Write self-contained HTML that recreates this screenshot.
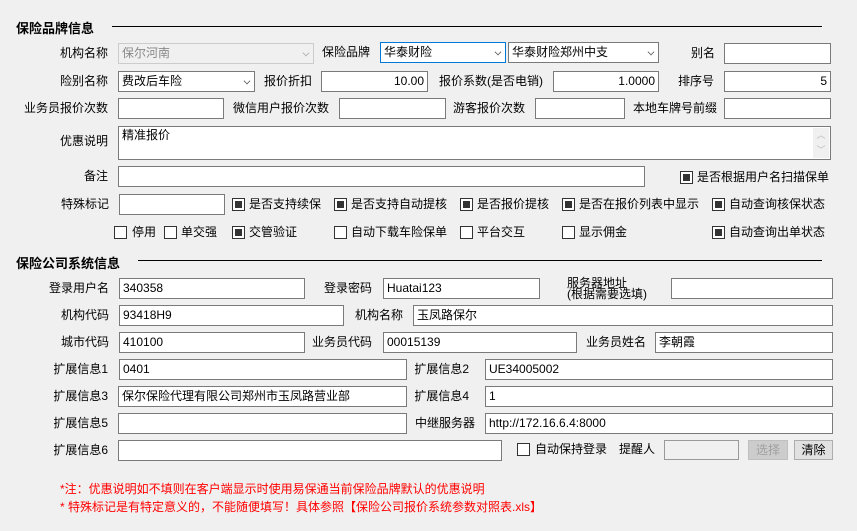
<!DOCTYPE html>
<html><head><meta charset="utf-8">
<style>
body{margin:0;width:857px;height:531px;background:#f0f0f0;font-family:"Liberation Sans","Noto Sans CJK SC",sans-serif;font-size:12px;color:#000;position:relative;overflow:hidden}
div,span{position:absolute;box-sizing:border-box;white-space:nowrap}
.i{background:#fff;border:1px solid #7a7a7a;height:21px;line-height:19px;padding:0 3px;font-size:12px}
.r{text-align:right}
.l{line-height:21px;text-align:right}
.h{font-weight:bold;font-size:13px}
.ln{height:1px;background:#000}
.cb{width:13px;height:13px;border:1px solid #333;background:#fff}
.cb.on::after{content:"";position:absolute;left:2px;top:2px;width:7px;height:7px;background:#333}
.ct{line-height:13px}
.dd{position:absolute;right:4px;top:6px;width:6px;height:6px;border-right:1px solid #555;border-bottom:1px solid #555;transform:rotate(45deg) scale(.8)}
.red{color:#f00;font-size:12px}
.btn{height:20px;border:1px solid #adadad;background:#e1e1e1;text-align:center;line-height:18px}
</style></head><body>
<div class="h" style="left:16px;top:18px">保险品牌信息</div>
<div class="ln" style="left:112px;top:26px;width:710px"></div>

<div class="l" style="right:749px;top:43px">机构名称</div>
<div class="i" style="left:118px;top:43px;width:196px;background:#f0f0f0;border-color:#ccc;color:#888">保尔河南<span class="dd" style="border-color:#aaa"></span></div>
<div class="l" style="right:487px;top:42px">保险品牌</div>
<div class="i" style="left:380px;top:42px;width:126px;border-color:#0078d7">华泰财险<span class="dd"></span></div>
<div class="i" style="left:508px;top:42px;width:151px">华泰财险郑州中支<span class="dd"></span></div>
<div class="l" style="right:142px;top:43px">别名</div>
<div class="i" style="left:724px;top:43px;width:107px"></div>

<div class="l" style="right:749px;top:71px">险别名称</div>
<div class="i" style="left:118px;top:71px;width:137px">费改后车险<span class="dd"></span></div>
<div class="l" style="right:545px;top:71px">报价折扣</div>
<div class="i r" style="left:321px;top:71px;width:107px">10.00</div>
<div class="l" style="right:314px;top:71px">报价系数(是否电销)</div>
<div class="i r" style="left:553px;top:71px;width:106px">1.0000</div>
<div class="l" style="right:143px;top:71px">排序号</div>
<div class="i r" style="left:724px;top:71px;width:107px">5</div>

<div class="l" style="right:749px;top:98px">业务员报价次数</div>
<div class="i" style="left:118px;top:98px;width:106px"></div>
<div class="l" style="right:528px;top:98px">微信用户报价次数</div>
<div class="i" style="left:339px;top:98px;width:107px"></div>
<div class="l" style="right:332px;top:98px">游客报价次数</div>
<div class="i" style="left:535px;top:98px;width:90px"></div>
<div class="l" style="right:140px;top:98px">本地车牌号前缀</div>
<div class="i" style="left:724px;top:98px;width:107px"></div>

<div class="l" style="right:749px;top:131px">优惠说明</div>
<div class="i" style="left:118px;top:126px;width:713px;height:34px;line-height:16px">精准报价
<span style="right:1px;top:1px;width:16px;height:30px;background:#f0f0f0;color:#bbb;font-size:9px;text-align:center;line-height:15px">︿<br>﹀</span></div>

<div class="l" style="right:749px;top:166px">备注</div>
<div class="i" style="left:118px;top:166px;width:527px"></div>
<div class="cb on" style="left:680px;top:171px"></div><div class="ct" style="left:697px;top:171px">是否根据用户名扫描保单</div>

<div class="l" style="right:748px;top:194px">特殊标记</div>
<div class="i" style="left:119px;top:194px;width:106px"></div>
<div class="cb on" style="left:232px;top:198px"></div><div class="ct" style="left:249px;top:198px">是否支持续保</div>
<div class="cb on" style="left:334px;top:198px"></div><div class="ct" style="left:351px;top:198px">是否支持自动提核</div>
<div class="cb on" style="left:460px;top:198px"></div><div class="ct" style="left:477px;top:198px">是否报价提核</div>
<div class="cb on" style="left:562px;top:198px"></div><div class="ct" style="left:579px;top:198px">是否在报价列表中显示</div>
<div class="cb on" style="left:712px;top:198px"></div><div class="ct" style="left:729px;top:198px">自动查询核保状态</div>

<div class="cb" style="left:114px;top:226px"></div><div class="ct" style="left:132px;top:226px">停用</div>
<div class="cb" style="left:164px;top:226px"></div><div class="ct" style="left:181px;top:226px">单交强</div>
<div class="cb on" style="left:232px;top:226px"></div><div class="ct" style="left:249px;top:226px">交管验证</div>
<div class="cb" style="left:334px;top:226px"></div><div class="ct" style="left:351px;top:226px">自动下载车险保单</div>
<div class="cb" style="left:460px;top:226px"></div><div class="ct" style="left:477px;top:226px">平台交互</div>
<div class="cb" style="left:562px;top:226px"></div><div class="ct" style="left:579px;top:226px">显示佣金</div>
<div class="cb on" style="left:712px;top:226px"></div><div class="ct" style="left:729px;top:226px">自动查询出单状态</div>

<div class="h" style="left:16px;top:253px">保险公司系统信息</div>
<div class="ln" style="left:138px;top:260px;width:684px"></div>

<div class="l" style="right:748px;top:278px">登录用户名</div>
<div class="i" style="left:119px;top:278px;width:186px">340358</div>
<div class="l" style="right:485px;top:278px">登录密码</div>
<div class="i" style="left:383px;top:278px;width:157px">Huatai123</div>
<div style="left:567px;top:278px;line-height:11px">服务器地址<br>(根据需要选填)</div>
<div class="i" style="left:671px;top:278px;width:162px"></div>

<div class="l" style="right:748px;top:305px">机构代码</div>
<div class="i" style="left:119px;top:305px;width:225px">93418H9</div>
<div class="l" style="right:454px;top:305px">机构名称</div>
<div class="i" style="left:413px;top:305px;width:420px">玉凤路保尔</div>

<div class="l" style="right:748px;top:332px">城市代码</div>
<div class="i" style="left:119px;top:332px;width:186px">410100</div>
<div class="l" style="right:485px;top:332px">业务员代码</div>
<div class="i" style="left:383px;top:332px;width:194px">00015139</div>
<div class="l" style="right:211px;top:332px">业务员姓名</div>
<div class="i" style="left:655px;top:332px;width:178px">李朝霞</div>

<div class="l" style="right:749px;top:359px">扩展信息1</div>
<div class="i" style="left:119px;top:359px;width:288px">0401</div>
<div class="l" style="right:388px;top:359px">扩展信息2</div>
<div class="i" style="left:485px;top:359px;width:348px">UE34005002</div>

<div class="l" style="right:749px;top:386px">扩展信息3</div>
<div class="i" style="left:118px;top:386px;width:289px">保尔保险代理有限公司郑州市玉凤路营业部</div>
<div class="l" style="right:388px;top:386px">扩展信息4</div>
<div class="i" style="left:485px;top:386px;width:348px">1</div>

<div class="l" style="right:749px;top:413px">扩展信息5</div>
<div class="i" style="left:118px;top:413px;width:289px"></div>
<div class="l" style="right:382px;top:413px">中继服务器</div>
<div class="i" style="left:485px;top:413px;width:348px">http://172.16.6.4:8000</div>

<div class="l" style="right:749px;top:440px">扩展信息6</div>
<div class="i" style="left:118px;top:440px;width:384px"></div>
<div class="cb" style="left:517px;top:443px"></div><div class="ct" style="left:535px;top:443px">自动保持登录</div>
<div class="l" style="right:202px;top:439px">提醒人</div>
<div class="i" style="left:664px;top:440px;width:75px;height:20px;background:#f0f0f0;border-color:#999"></div>
<div class="btn" style="left:748px;top:440px;width:40px;color:#a0a0a0;background:#ccc;border-color:#bfbfbf">选择</div>
<div class="btn" style="left:794px;top:440px;width:39px">清除</div>

<div class="red" style="left:60px;top:480px">*注：优惠说明如不填则在客户端显示时使用易保通当前保险品牌默认的优惠说明</div>
<div class="red" style="left:60px;top:498px">* 特殊标记是有特定意义的，不能随便填写！具体参照【保险公司报价系统参数对照表.xls】</div>
</body></html>
